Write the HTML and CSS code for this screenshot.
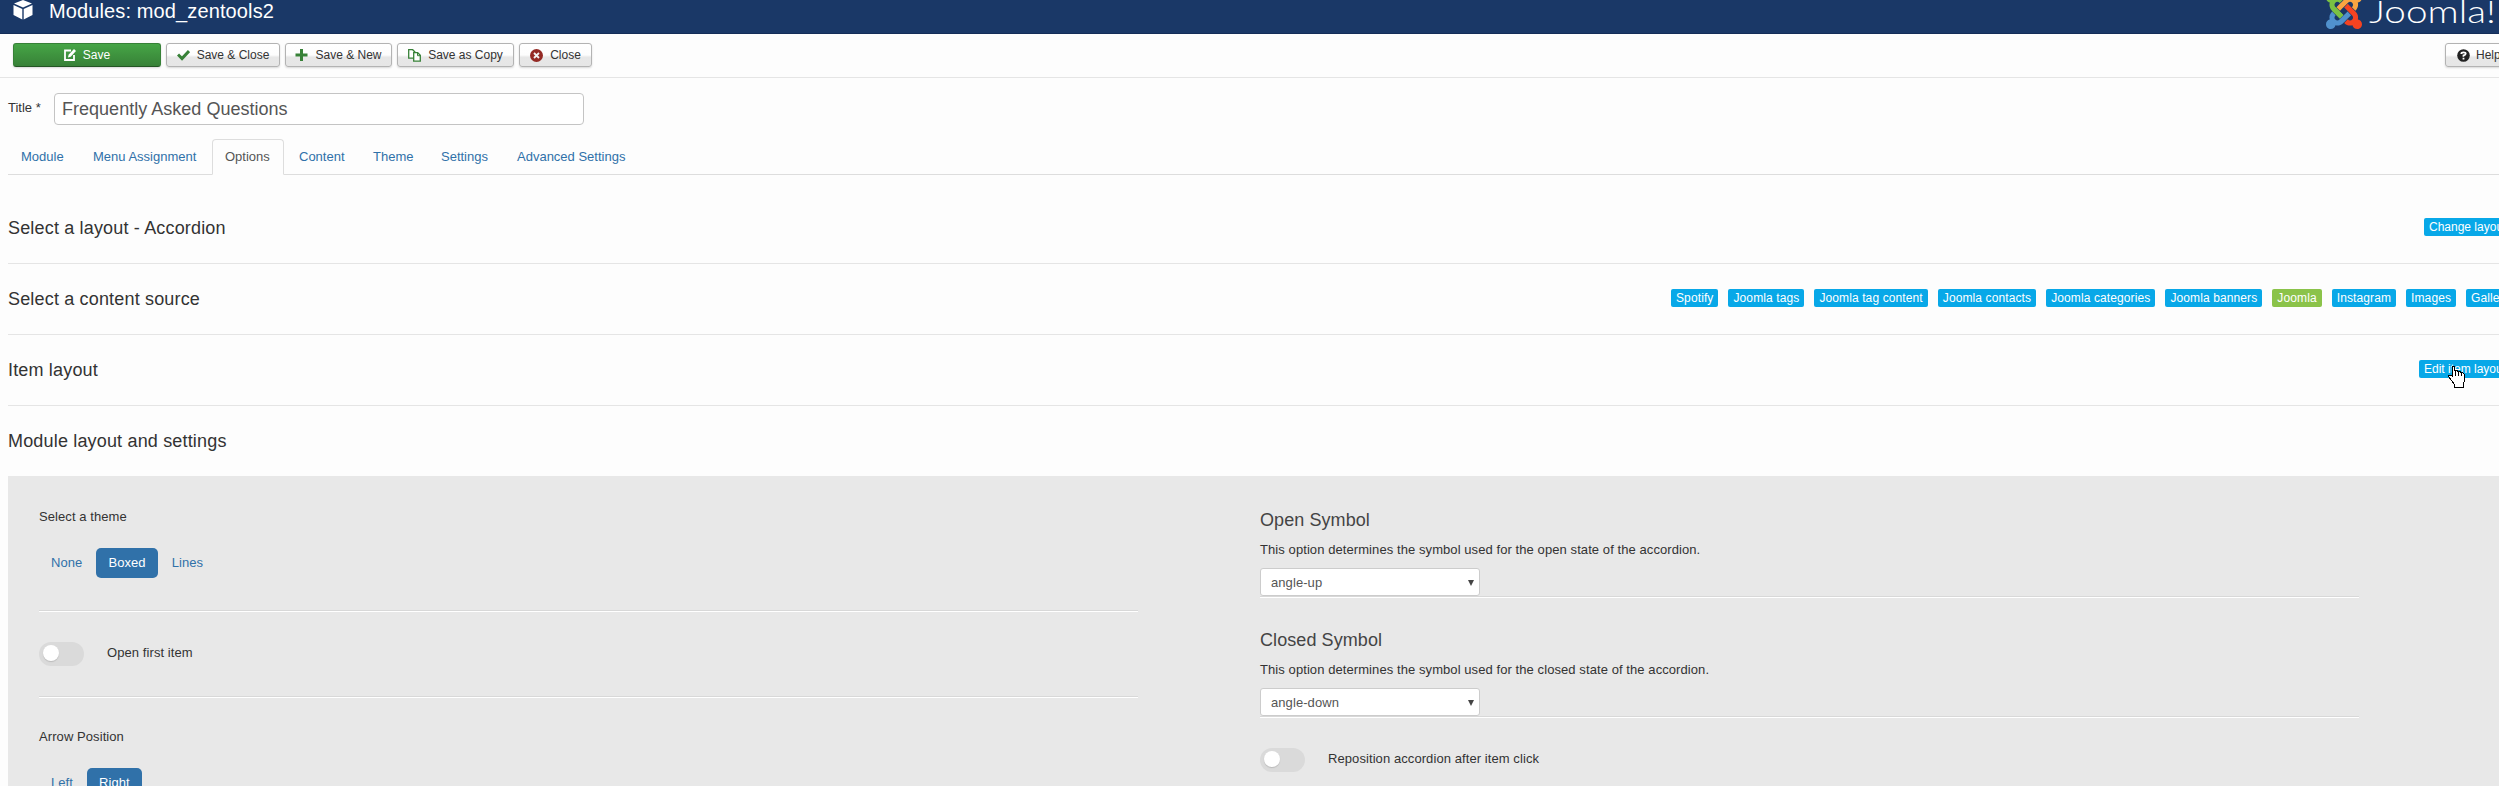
FILE: index.html
```html
<!DOCTYPE html>
<html lang="en">
<head>
<meta charset="utf-8">
<title>Modules: mod_zentools2</title>
<link rel="stylesheet" href="styles.css">
</head>
<body>
<header class="header">
  <svg class="cube" width="20" height="20" viewBox="0 0 20 20"><path fill="#fff" d="M10 0l9 3.600-9 4-9-4zM.5 5L9.300 9v10.500L.500 15zM19.500 5v10l-8.800 4.500V9z"/></svg>
  <h1 class="page-title">Modules: mod_zentools2</h1>
  <div class="brand">
    <svg class="mark" width="36" height="36" viewBox="0 32 448 448">
      <path fill="#7ac143" d="M.6 92.1C.6 58.8 27.4 32 60.4 32c30 0 54.5 21.9 59.2 50.2 32.600-7.600 67.100.6 96.500 30l-44.300 44.300c-20.500-20.500-42.600-16.300-55.400-3.500-14.300 14.300-14.300 37.900 0 52.200l99.500 99.500-44 44.300c-87.700-87.200-49.700-49.700-99.800-99.700-26.800-26.500-35-64.800-24.800-98.900C20.400 144.600.6 120.700.6 92.100z"/>
      <path fill="#f9a541" d="M130.100 208.500l44.300 44.300c10-10 89.700-89.700 99.700-99.800 14.300-14.300 37.600-14.300 51.900 0 12.800 12.800 17 35-3.500 55.400l44 44.300c31.200-31.200 38.500-67.600 28.900-101.200 29.200-4.100 51.900-29.200 51.900-59.500 0-33.200-26.800-60.100-59.800-60.100-30.300 0-55.400 22.500-59.500 51.600-33.800-9.900-71.700-1.500-98.300 25.100-18.300 19.100-71.100 71.500-99.600 99.900z"/>
      <path fill="#f44321" d="M396.400 360.700c8.200-32.700-.9-68.500-26.300-93.900-11.800-12.200 5 4.700-99.500-99.700l-44.300 44.300 99.700 99.700c14.300 14.300 14.300 37.600 0 51.900-12.800 12.800-35 17-55.400-3.500l-44 44.300c27.600 30.200 68 38.800 102.700 28 5.500 27.400 29.700 48.100 58.900 48.100 33 0 59.800-26.800 59.800-60.100 0-30.200-22.500-55-51.600-59.100z"/>
      <path fill="#5091cd" d="M312.100 307.600l-44-44.300c-87 86.400-50.400 50.400-99.700 99.800-14.300 14.300-37.600 14.300-51.900 0-13.100-13.400-16.900-35.300 3.200-55.400l-44-44.300c-30.200 30.200-38 65.200-29.500 98.300-26.700 6-46.200 29.900-46.200 58.200C0 453.200 26.800 480 59.800 480c28.600 0 52.500-19.800 58.600-46.700 32.700 8.200 68.500-.6 94.200-26 32.100-32 12.200-12.400 99.500-99.700z"/>
      <path fill="#7ac143" d="M116.400 205.200l99.500 99.500-44 44.300-99.800-99.700z"/>
    </svg>
    <span class="word">Joomla!</span>
  </div>
</header>
<nav class="toolbar">
  <button class="btn save"><svg width="12" height="12" viewBox="0 0 12 12"><path fill="none" stroke="#fff" stroke-width="1.800" d="M7 1.500H1v9.500h9V6"/><path fill="#fff" d="M4 8.500l.6-2.800L10 0l2 2-5.300 5.700z"/></svg><span>Save</span></button>
  <button class="btn b-close"><svg width="13" height="12" viewBox="0 0 13 12"><path fill="none" stroke="#378137" stroke-width="3" d="M1 5.500L5 9.500 12 2"/></svg><span>Save &amp; Close</span></button>
  <button class="btn b-new"><svg width="13" height="12" viewBox="0 0 13 12"><path fill="none" stroke="#378137" stroke-width="3" d="M.5 6h12M6.500 0v12"/></svg><span>Save &amp; New</span></button>
  <button class="btn b-copy"><svg width="13" height="13" viewBox="0 0 13 13"><path fill="#fff" stroke="#378137" stroke-width="1.300" d="M.7.700h4l2.500 2.500v6H.7z"/><path fill="#fff" stroke="#378137" stroke-width="1.300" d="M5.700 3.700h4l2.600 2.500v6H5.700z"/><path stroke="#378137" fill="none" d="M9.500 3.700v3h3"/></svg><span>Save as Copy</span></button>
  <button class="btn b-x"><svg width="13" height="13" viewBox="0 0 13 13"><circle cx="6.500" cy="6.500" r="6.500" fill="#942a25"/><path stroke="#f3f3f3" stroke-width="1.800" d="M4 4l5 5M9 4l-5 5"/></svg><span>Close</span></button>
  <button class="btn help"><svg width="13" height="13" viewBox="0 0 13 13"><circle cx="6.500" cy="6.500" r="6.300" fill="#222"/><path fill="none" stroke="#fff" stroke-width="1.800" d="M4.300 5q0-1.700 2.200-1.700T8.700 4.800Q8.700 6 6.500 6.500v1.200M6.500 8.800v1.700"/></svg><span>Help</span></button>
</nav>
<main class="main">
  <div class="title-row"><label class="title-label">Title *</label><div class="title-input"><span>Frequently Asked Questions</span></div></div>
  <ul class="tabs">
    <li class="t-module">Module</li><li class="t-menu">Menu Assignment</li><li class="t-options active">Options</li><li class="t-content">Content</li><li class="t-theme">Theme</li><li class="t-settings">Settings</li><li>Advanced Settings</li>
  </ul>
  <section class="row first"><h2>Select a layout - Accordion</h2><div class="labels one"><span>Change layout</span></div></section>
  <section class="row"><h2>Select a content source</h2><div class="labels many"><span>Spotify</span><span>Joomla tags</span><span>Joomla tag content</span><span>Joomla contacts</span><span>Joomla categories</span><span>Joomla banners</span><span class="on">Joomla</span><span>Instagram</span><span>Images</span><span>Gallery</span></div></section>
  <section class="row"><h2>Item layout</h2><div class="labels two"><span>Edit item layout</span>
    <svg class="cursor" width="18" height="23" viewBox="0 0 18 23" shape-rendering="crispEdges"><path fill="#fff" stroke="#000" d="M4.500.500h2v4h3v1h3v1h2l2 2v6l-1 3v4h-9v-3l-3-4-3-4v-1h3l1 1z"/><path stroke="#000" d="M7.500 5v5M10.500 6v4M13.500 7v3"/></svg></div></section>
  <section class="row last"><h2>Module layout and settings</h2></section>
  <div class="panel">
    <div class="col">
      <p class="lab">Select a theme</p>
      <div class="pills"><span>None</span><span class="active">Boxed</span><span>Lines</span></div>
      <hr class="h1">
      <div class="switch-row"><i class="switch"></i><span>Open first item</span></div>
      <hr class="h2">
      <p class="lab second">Arrow Position</p>
      <div class="pills"><span>Left</span><span class="active">Right</span></div>
    </div>
    <div class="col right">
      <h3>Open Symbol</h3>
      <p class="desc">This option determines the symbol used for the open state of the accordion.</p>
      <div class="select"><span>angle-up</span><i></i></div>
      <hr>
      <h3 class="next">Closed Symbol</h3>
      <p class="desc">This option determines the symbol used for the closed state of the accordion.</p>
      <div class="select"><span>angle-down</span><i></i></div>
      <hr>
      <div class="switch-row"><i class="switch"></i><span>Reposition accordion after item click</span></div>
    </div>
  </div>
</main>
</body>
</html>
```
FILE: styles.css
```css
* { box-sizing: border-box; }
html, body { margin: 0; height: 786px; overflow: hidden; }
body { background: #fdfdfd; font: 13px/18px "Liberation Sans", Arial, sans-serif; color: #333; display: flex; flex-direction: column; }
h1, h2, h3, p, ul { margin: 0; padding: 0; font-weight: normal; }
.header { flex: none; height: 34px; background: #1a3867; border-bottom: 1px solid #142d58; display: flex; align-items: flex-start; overflow: hidden; }
.cube { margin-left: 13px; flex: none; }
.page-title { margin-left: 16px; color: #fff; font-size: 20px; line-height: 23px; letter-spacing: .12px; }
.brand { margin-left: auto; width: 173px; display: flex; flex: none; white-space: nowrap; }
.mark { margin-top: -7px; flex: none; }
.word { color: #fff; font: 300 32px/36px Lato, sans-serif; margin: -7px 0 0 7px; transform: scaleX(1.21); transform-origin: 0 0; }
.toolbar { flex: none; height: 44px; border-bottom: 1px solid #e5e5e5; padding: 9px 0 0 13px; display: flex; align-items: flex-start; }
.btn { flex: none; height: 24px; padding: 0; margin: 0 5px 0 0; border: 1px solid #b3b3b3; border-radius: 3px; background: linear-gradient(#fff 0, #fdfdfd 50%, #e7e7e7 60%, #e6e6e6); box-shadow: 0 1px 2px rgba(0,0,0,.15); font: 12px/22px "Liberation Sans", Arial, sans-serif; color: #333; display: flex; justify-content: center; align-items: center; gap: 7px; white-space: nowrap; }
.btn svg { flex: none; }
.save { width: 148px; color: #fff; background: linear-gradient(#46a546, #378137); border-color: #378137 #378137 #245524; }
.b-close { width: 114px; }
.b-new { width: 107px; }
.b-copy { width: 117px; }
.b-x { width: 73px; }
.help { width: 73px; margin: 0 -19px 0 auto; justify-content: flex-start; padding-left: 11px; gap: 6px; }
.main { flex: 1; padding: 15px 0 0 8px; }
.title-row { display: flex; height: 32px; }
.title-label { width: 46px; line-height: 30px; }
.title-input { width: 530px; height: 32px; border: 1px solid #c4c4c4; border-radius: 4px; background: #fff; color: #555; padding-left: 7px; font-size: 18px; line-height: 31px; letter-spacing: .02px; }
.tabs { list-style: none; display: flex; margin-top: 14px; height: 36px; border-bottom: 1px solid #ddd; color: #3071a9; }
.tabs li { height: 36px; line-height: 33px; padding-left: 12px; margin-right: 2px; border: 1px solid transparent; white-space: nowrap; }
.tabs .active { background: #fdfdfd; border-color: #ddd #ddd #fdfdfd; border-radius: 4px 4px 0 0; color: #555; }
.t-module { width: 70px; }
.t-menu { width: 130px; }
.t-options { width: 72px; }
.t-content { width: 72px; }
.t-theme { width: 66px; }
.t-settings { width: 74px; }
.row { height: 71px; border-bottom: 1px solid #e5e5e5; display: flex; justify-content: space-between; }
.row.first { height: 89px; padding-top: 18px; }
.row.last { height: 70px; border: 0; }
.row h2 { font-size: 18px; line-height: 70px; letter-spacing: .17px; }
.labels { display: flex; flex: none; gap: 10px; padding-top: 25px; white-space: nowrap; position: relative; }
.labels span { height: 18px; background: #08a8e8; color: #fff; border-radius: 2px; font-size: 12px; line-height: 18px; padding: 0 5px; }
.labels .on { background: #8bc34a; }
.one { width: 75px; }
.many { width: 828px; letter-spacing: .11px; }
.two { width: 80px; }
.cursor { position: absolute; left: 29px; top: 31px; }
.panel { background: #e8e8e8; height: 320px; padding-left: 31px; display: flex; letter-spacing: .08px; }
.col { width: 1099px; }
.col.right { margin-left: 122px; }
.lab { padding-top: 32px; line-height: 18px; }
.lab.second { padding-top: 30px; }
.pills { display: flex; margin-top: 22px; color: #3071a9; gap: 2px; }
.pills span { height: 30px; line-height: 30px; padding: 0 12px; border-radius: 5px; }
.pills .active { background: #3071a9; color: #fff; }
hr { margin: 0; height: 2px; border: 0; background: #fff; border-top: 1px solid #d8d8d8; }
.h1 { margin-top: 32px; }
.switch-row { display: flex; align-items: center; height: 24px; margin-top: 30px; gap: 23px; line-height: 22px; }
.switch-row span { padding-bottom: 2px; }
.switch { width: 45px; height: 24px; border-radius: 12px; background: #dadada; padding: 3px 4px; display: block; }
.switch::before { content: ""; display: block; width: 16px; height: 16px; border-radius: 50%; background: #fff; box-shadow: 0 1px 1px #bbb; }
.h2 { margin-top: 30px; }
h3 { font-size: 18px; line-height: 24px; color: #444; padding-top: 32px; }
h3.next { padding-top: 30px; }
.desc { margin-top: 9px; line-height: 18px; }
.select { margin-top: 9px; width: 220px; height: 28px; background: #fff; border: 1px solid #ccc; border-radius: 3px; padding: 1px 5px 0 10px; display: flex; justify-content: space-between; align-items: center; color: #555; }
.select i { border: 3px solid transparent; border-top: 6px solid #444; border-bottom: 0; }
```
